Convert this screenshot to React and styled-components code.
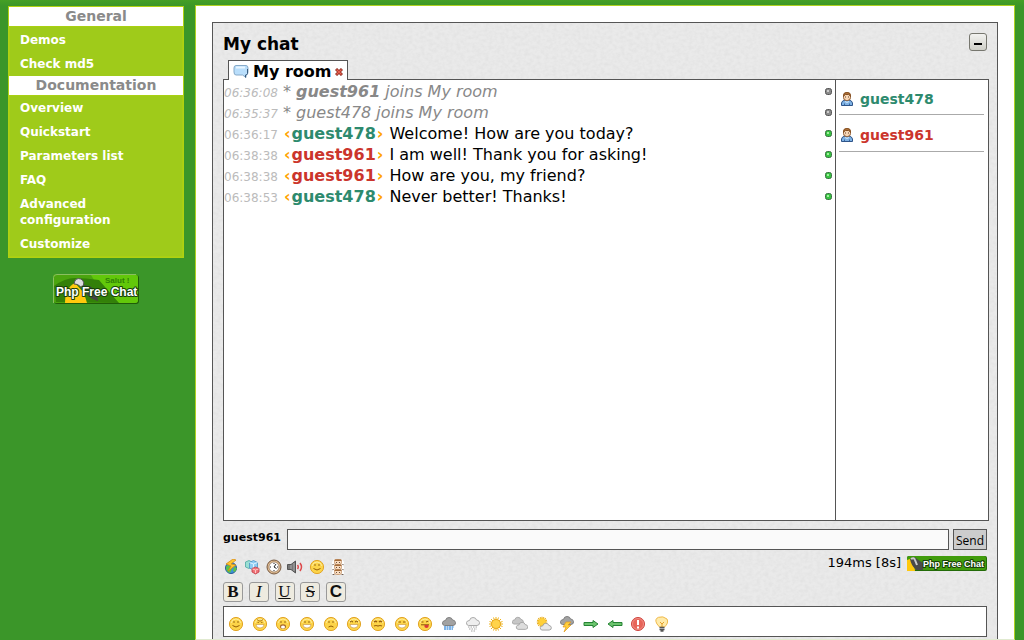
import React from "react";
import styled, { createGlobalStyle } from "styled-components";

const sans = `"DejaVu Sans", Verdana, sans-serif`;
const logoFont = `"Liberation Sans", Arial, sans-serif`;
const teal = "#2d8a6e";
const red = "#cb352c";
const line = "#555";

const paper = encodeURIComponent(
  `<svg xmlns="http://www.w3.org/2000/svg" width="200" height="200"><filter id="p" x="0" y="0" width="100%" height="100%"><feTurbulence type="fractalNoise" baseFrequency="0.25 0.3" numOctaves="3" seed="4" stitchTiles="stitch"/><feColorMatrix values="0 0 0 0 0.6  0 0 0 0 0.6  0 0 0 0 0.6  0.45 0 0 0 -0.15"/></filter><rect width="200" height="200" fill="#eaeaea"/><rect width="200" height="200" filter="url(#p)"/></svg>`
);

const GlobalStyle = createGlobalStyle`
  * { box-sizing: border-box; }
  body { margin: 0; background: #3b9629; font-family: ${sans}; }
  ul, ol { list-style: none; margin: 0; padding: 0; }
  h1, h2 { margin: 0; }
`;

const Page = styled.div`
  display: flex;
  gap: 11px;
  min-height: 100vh;
  padding: 5px 9px 0 8px;
  background: linear-gradient(#459f25, #3b9629 6px);
`;

const Sidebar = styled.aside`
  flex: 0 0 176px;
  padding-top: 1px;
`;

const Menu = styled.nav`
  border: 1px solid #b0d112;
`;

const MenuHeading = styled.h2`
  background: #fff;
  color: #8a8a8a;
  font-size: 14px;
  line-height: 19px;
  text-align: center;
`;

const MenuList = styled.ul`
  background: #9fcb1a;
  border: 1px solid #a9d012;
  border-bottom-width: ${(p) => (p.$last ? "1px" : "0")};
  padding-top: ${(p) => (p.$last ? "0" : "1px")};
`;

const MenuLink = styled.a`
  display: block;
  padding: 4px 40px 4px 10px;
  color: #fff;
  font-size: 12px;
  font-weight: bold;
  line-height: 16px;
  text-decoration: none;
`;

const Badge = styled.a`
  display: block;
  width: 86px;
  height: 31px;
  margin: 16px auto 0;
`;

const Main = styled.main`
  display: flex;
  flex: 1;
  min-width: 0;
  padding: 16px 16px 0;
  background: #fff;
  border: 1px solid #b0d122;
  border-bottom-color: #e0ead0;
`;

const Chat = styled.section`
  display: flex;
  flex: 1;
  flex-direction: column;
  min-width: 0;
  padding: 0 10px 2px;
  border: 1px solid ${line};
  border-bottom: 0;
  background: #e8e8e8 url("data:image/svg+xml,${paper}");
`;

const Header = styled.header`
  display: flex;
  flex: 0 0 37px;
  align-items: center;
  justify-content: space-between;
`;

const Title = styled.h1`
  padding-top: 5px;
  font-size: 17px;
  line-height: 20px;
`;

const MinimizeButton = styled.button`
  display: flex;
  width: 18px;
  height: 18px;
  padding: 0;
  align-items: center;
  justify-content: center;
  border: 1px solid #77776f;
  border-radius: 3px;
  background: linear-gradient(#f2f2f0, #cfcfc8);
`;

const Tabs = styled.div`
  display: flex;
  position: relative;
  padding-left: 5px;
  margin-bottom: -1px;
`;

const Tab = styled.div`
  display: flex;
  height: 20px;
  width: 120px;
  align-items: center;
  gap: 4px;
  padding: 2px 4px 0;
  border: 1px solid ${line};
  border-bottom: 0;
  background: #fff;
`;

const TabButton = styled.button`
  display: flex;
  align-items: center;
  gap: 4px;
  padding: 0;
  border: 0;
  background: none;
  color: #000;
  font: bold 16px/20px ${sans};
  white-space: nowrap;
`;

const CloseButton = styled.button`
  display: flex;
  padding: 0;
  border: 0;
  background: none;
`;

const Panel = styled.div`
  display: flex;
  flex: 1;
  min-height: 240px;
  margin-right: -2px;
  border: 1px solid ${line};
  background: #fff;
`;

const Messages = styled.ol`
  flex: 1;
  padding-top: 1px;
`;

const Message = styled.li`
  display: flex;
  align-items: center;
  justify-content: space-between;
  min-height: 21px;
  padding-right: 3px;
  font-size: 16px;
  line-height: 21px;
  color: ${(p) => (p.$notice ? "#888" : "#000")};
  font-style: ${(p) => (p.$notice ? "italic" : "normal")};
`;

const Time = styled.time`
  margin-right: 5px;
  color: #bbb;
  font-size: 12px;
  line-height: 12px;
`;

const Bracket = styled.span`
  padding: 0 1px;
  color: #ffa500;
  font-weight: bold;
`;

const Nick = styled.strong`
  color: ${(p) => p.$color || "inherit"};
`;

const Users = styled.ul`
  flex: 0 0 153px;
  padding: 0 4px 0 3px;
  border-left: 1px solid ${line};
`;

const User = styled.li`
  display: flex;
  height: 37px;
  align-items: center;
  gap: 5px;
  padding-top: 3px;
  border-bottom: 1px solid #aaa;
  color: ${(p) => p.$color};
  font-size: 14px;
  font-weight: bold;

  &:first-child { height: 35px; }
`;

const InputRow = styled.form`
  display: flex;
  gap: 4px;
  margin-top: 8px;
`;

const NickLabel = styled.label`
  margin-right: 2px;
  font-size: 11px;
  font-weight: bold;
  line-height: 17px;
`;

const TextInput = styled.input`
  flex: 1;
  min-width: 0;
  height: 21px;
  padding: 0 4px;
  border: 1px solid ${line};
  background: #fafafa;
  font: 13px ${sans};
`;

const SendButton = styled.button`
  width: 34px;
  height: 21px;
  padding: 2px 0 0;
  border: 1px solid ${line};
  background: #ccc;
  color: #000;
  font: 12px/16px "Open Sans", sans-serif;
`;

const Tools = styled.div`
  display: flex;
  align-items: flex-start;
  justify-content: space-between;
`;

const ToolColumn = styled.div`
  display: flex;
  flex-direction: column;
  gap: 7px;
  width: 123px;
  padding-top: 9px;
`;

const ToolRow = styled.div`
  display: flex;
  justify-content: space-between;
`;

const IconButton = styled.button`
  display: flex;
  padding: 0;
  border: 0;
  background: none;
`;

const FormatButton = styled.button`
  width: 20px;
  height: 20px;
  padding: 0;
  border: 1px solid #999;
  border-radius: 3px;
  background: #eeebe0;
  color: #111;
  font-family: ${(p) => (p.$sans ? `"Liberation Sans", sans-serif` : `"Liberation Serif", serif`)};
  font-size: 17px;
  font-weight: ${(p) => (p.$bold ? "bold" : "normal")};
  font-style: ${(p) => (p.$italic ? "italic" : "normal")};
  text-decoration: ${(p) => p.$line || "none"};
  line-height: 18px;
`;

const Status = styled.div`
  display: flex;
  align-items: center;
  gap: 6px;
  padding-top: 5px;
  font-size: 13px;
  line-height: 16px;
`;

const LogoLink = styled.a`
  display: flex;
`;

const SmileyBox = styled.div`
  margin-top: 4px;
  padding: 9px 4px 4px;
  border: 1px solid ${line};
  background: #fff;
`;

const SmileyRow = styled.div`
  display: flex;
  justify-content: space-between;
  width: 442px;
  max-width: 100%;
`;

/* ---- drawings ---- */

const LogoText = styled.text`
  fill: #fff;
  stroke: #17420a;
  stroke-width: 2px;
  stroke-linejoin: round;
  paint-order: stroke;
  font-family: ${logoFont};
  font-weight: bold;
  font-size: ${(p) => p.$size}px;
`;

function BigLogo() {
  return (
    <svg width="86" height="30" viewBox="0 0 86 30">
      <rect x="1" y="1" width="85" height="29" rx="3" fill="#1f5c08" />
      <rect x="0" y="0" width="85" height="29" rx="3" fill="#4ba50f" />
      <path d="M38 1H82q3 0 3 3V26q0 3-3 3H66Q50 22 38 1z" fill="#62c80a" />
      <path d="M3 28 1 12Q12 4 22 4T46 6Q58 20 66 29z" fill="#338009" />
      <path d="M12 29C12 18 16 12 22 9L31 19 34 29z" fill="#ffc90d" />
      <path d="M21 10Q22 3 28 5 33 8 29 14 24 9 21 10z" fill="#ddd" stroke="#555" />
      <path d="M28 12Q36 9 44 18L45 27Q34 25 28 12z" fill="#444" />
      <path d="M.5 29V3.500Q.5.5 4 .5H83" fill="none" stroke="#8abf60" />
      <text x="52" y="9" fill="#2f8206" fontFamily={logoFont} fontWeight="bold" fontSize="8">Salut !</text>
      <LogoText x="3" y="22" $size={12}>Php Free Chat</LogoText>
    </svg>
  );
}

function SmallLogo() {
  return (
    <svg width="80" height="15" viewBox="0 0 80 15">
      <rect width="80" height="15" rx="2" fill="#236b08" />
      <rect width="79" height="14" rx="2" fill="#419c0c" />
      <path d="M0 15V4L6 2 8 15z" fill="#ffc90d" />
      <path d="M3 3Q7-1 10 3L16 7V14H9Q4 9 3 3z" fill="#4a4a4a" />
      <path d="M4 3Q7 1 8 4L10 9" fill="none" stroke="#ccc" strokeWidth="2" />
      <LogoText x="16" y="11" $size={9}>Php Free Chat</LogoText>
    </svg>
  );
}

function Bubble() {
  return (
    <svg width="16" height="16" viewBox="0 0 16 16">
      <path d="M3 1.500H13Q15 1.500 15 4V8Q15 11 13 11V13.500L9.500 11H3Q1 11 1 8V4Q1 1.500 3 1.500z" fill="#b9defb" stroke="#86a9c8" />
      <path d="M3 3.500H12" stroke="#e9f6ff" strokeWidth="2" />
      <path d="M14.500 5V9.500Q14 11 12.500 11V13.500" fill="none" stroke="#375a7c" />
    </svg>
  );
}

function Cross() {
  return (
    <svg width="8" height="8" viewBox="0 0 8 8">
      <path d="M1 1 7 7M7 1 1 7" stroke="#8e2c20" strokeWidth="3" />
      <path d="M1.500 1.500 6.500 6.500M6.500 1.500 1.500 6.500" stroke="#e86050" strokeWidth="1.200" />
    </svg>
  );
}

function Dot({ online }) {
  return (
    <svg width="7" height="7" viewBox="0 0 7 7">
      <rect x=".5" y=".5" width="6" height="6" rx="2" fill={online ? "#37c441" : "#8a8a8a"} stroke={online ? "#3b7042" : "#555"} />
      <rect x="2" y="2" width="2" height="2" fill={online ? "#a4efa0" : "#ccc"} />
    </svg>
  );
}

function Person() {
  return (
    <svg width="16" height="16" viewBox="0 0 16 16">
      <path d="M2.500 14.500V12Q3 9.500 6 9H10Q13 9.500 13.500 12V14.500z" fill="#7fb2e4" stroke="#2f558a" />
      <path d="M5.500 14V12.500M10.500 14V12.500" stroke="#3c689f" />
      <path d="M6 10.500Q8 12.500 10 10.500" fill="none" stroke="#d5e9fa" />
      <rect x="4.500" y="1.500" width="7" height="8" rx="3" fill="#f7d6b5" stroke="#8b562b" />
      <path d="M4.500 5Q4.500 1.500 8 1.500T11.500 5L9.500 3.500H6.500z" fill="#b8763b" stroke="#855123" />
      <path d="M6.500 5.500V6.500M9.500 5.500V6.500" stroke="#61452f" />
    </svg>
  );
}

function ToolIcon({ kind }) {
  const art = {
    connect: (
      <>
        <circle cx="8" cy="9" r="5.500" fill="#3d93d8" stroke="#275a93" />
        <path d="M3 8Q5 5 7 7L9 10 7 14Q3 13 3 8zM11 8 14 9 12 13 10 12z" fill="#5ec246" />
        <path d="M10 0 3 5 8 7 5 12 13 6 8 5 13 1z" fill="#ffc52f" stroke="#d78609" strokeWidth=".7" />
      </>
    ),
    color: (
      <>
        <path d="M1.500 3 5 1.500 8 3V8L5 9.500 1.500 8z" fill="#9adfd3" stroke="#4da8a2" strokeWidth=".8" />
        <path d="M5.500 3.500 9.500 1.500 13.500 3.500V9L9.500 11 5.500 9z" fill="#8dcdf2" stroke="#4b93c4" strokeWidth=".8" />
        <path d="M5.500 3.500 9.500 5 13.500 3.500M9.500 5V10.500" fill="none" stroke="#dff2ff" />
        <path d="M8 9.500 11.500 8 15 9.500V13L11.500 15 8 13z" fill="#ef7276" stroke="#c23b48" strokeWidth=".8" />
        <path d="M8.500 10 11.500 11 14.500 10M11.500 11V14" fill="none" stroke="#ffc6c6" />
      </>
    ),
    clock: (
      <>
        <circle cx="8" cy="8" r="7" fill="#dcb98f" stroke="#6b4c33" strokeWidth=".9" />
        <circle cx="8" cy="8" r="5" fill="#fff" stroke="#8f7156" strokeWidth=".7" />
        <path d="M10 5 8 8 10.500 9.500M4 8H5M8 12V11M8 4V5M12 8H11" fill="none" stroke="#222" />
      </>
    ),
    sound: (
      <>
        <path d="M.5 5.500H4L8.500 2V14L4 10.500H.5z" fill="#777" stroke="#555" />
        <path d="M4 6V10M7 4V12" stroke="#aaa" />
        <path d="M10.500 6Q12 8 10.500 10M13 4Q16 8 13 12" fill="none" stroke="#dd494b" strokeWidth="1.500" />
      </>
    ),
    people: (
      <>
        {[0, 5, 10].map((y) => (
          <g key={y} transform={`translate(0 ${y})`}>
            <path d="M2 6V3L4 0H12L14 3V6z" fill="#fff" />
            <rect x="4.500" y=".5" width="7" height="5" rx="2" fill="#f9dcc0" stroke="#b98352" strokeWidth=".7" />
            <path d="M4.500 1.200H11.500" stroke="#a66d3b" strokeWidth="1.600" />
            <path d="M6.500 3V4M9.500 3V4M2.500 5.500H4.500M11.500 5.500H13.500" stroke="#493223" strokeWidth=".8" />
          </g>
        ))}
      </>
    ),
  };
  return <svg width="16" height="16" viewBox="0 0 16 16">{art[kind]}</svg>;
}

function Face({ mood }) {
  const eyes = <path d="M6 5V7M10 5V7" stroke="#9a6a14" />;
  const grin = <path d="M4 8.500H12Q12 12 8 12T4 8.500z" fill="#fff" stroke="#c8923a" strokeWidth=".6" />;
  const art = {
    smile: <>{eyes}<path d="M4.500 9.500Q8 12.500 11.500 9.500" fill="none" stroke="#945d05" /></>,
    evil: <><path d="M5 3.500 7 5 9 5 11 3.500M5.500 6.500H7M9 6.500H10.500" fill="none" stroke="#a8751c" strokeWidth=".9" />{grin}</>,
    gasp: <>{eyes}<ellipse cx="8" cy="10.500" rx="3" ry="2.300" fill="#a9692c" /><ellipse cx="8" cy="11" rx="2" ry="1.500" fill="#fff" /></>,
    grin: <>{eyes}{grin}</>,
    sad: <>{eyes}<path d="M5.500 11Q8 9 10.500 11" fill="none" stroke="#945d05" /></>,
    laugh: <><path d="M4 6Q5.500 4.500 7 6M9 6Q10.500 4.500 12 6" fill="none" stroke="#7e4c05" />{grin}</>,
    smug: <><path d="M4 6Q5.500 4.500 7 6M9 6Q10.500 4.500 12 6M4 10Q6 9 8 10 10 9 12 10" fill="none" stroke="#9a6010" strokeWidth="1.200" /></>,
    wink: <><path d="M4.500 6H7M9 6H11.500" fill="none" stroke="#945d05" />{grin}</>,
    tongue: <><path d="M4.500 6H6.500M9 6 11.500 5M4 8.800H12" stroke="#8d5309" /><path d="M7.500 9H11.500V11Q9.500 13 7.500 11z" fill="#d93a39" /></>,
  };
  return (
    <svg width="16" height="16" viewBox="0 0 16 16">
      <circle cx="8" cy="8" r="6.600" fill="#fcd449" stroke="#e2a527" />
      <path d="M3 7Q4 3 8 3T13 7" fill="none" stroke="#ffec9c" />
      {art[mood]}
    </svg>
  );
}

const cloud = "M3.500 9.500Q1 9 1.500 6.500 2 4.500 4.500 4.500 5 1.500 8 1.500T11.500 4Q14 4 14.500 6.500T12 9.500z";
const sunRays = "M8 1V15M1 8H15M3 3 13 13M13 3 3 13M5.500 1.500 10.500 14.500M10.500 1.500 5.500 14.500M1.500 5.500 14.500 10.500M14.500 5.500 1.500 10.500";

function Symbol({ kind }) {
  const art = {
    rain: <><path d="M3 11H13M3 13H12" stroke="#7db3e8" strokeWidth="2" strokeDasharray="2 .5" /><path d={cloud} fill="#a2a2a2" stroke="#808080" /></>,
    snow: <><path d="M3 11H13M4 13H12M6 15H10" stroke="#a2a2a2" strokeDasharray="1.500 1" /><path d={cloud} fill="#eee" stroke="#aaa" /></>,
    sun: <><path d={sunRays} stroke="#eeb31d" /><circle cx="8" cy="8" r="4.500" fill="#ffd34a" stroke="#e9a922" /></>,
    cloudy: <><path d={cloud} fill="#c6c6c6" stroke="#a2a2a2" transform="translate(-1 0) scale(.85)" /><path d={cloud} fill="#ddd" stroke="#a2a2a2" transform="translate(3 5) scale(.88)" /></>,
    partly: <><g transform="scale(.75)"><path d={sunRays} stroke="#e8ac1c" strokeWidth="1.500" /><circle cx="8" cy="8" r="5" fill="#ffd039" /></g><path d={cloud} fill="#e8e8e8" stroke="#999" transform="translate(3 6) scale(.85)" /></>,
    storm: <><path d={cloud} fill="#a2a2a2" stroke="#808080" transform="translate(0 -1)" /><path d="M7 6H12L9 9H12L5 16 7 11H4z" fill="#ffce3b" stroke="#df991c" strokeWidth=".7" /></>,
    right: <path d="M1 6.500H10V4.500L15 8 10 11.500V9.500H1z" fill="#6bc46d" stroke="#268335" />,
    left: <path d="M15 6.500H6V4.500L1 8 6 11.500V9.500H15z" fill="#6bc46d" stroke="#268335" />,
    alert: <><circle cx="8" cy="8" r="6.500" fill="#e76459" stroke="#ce433d" /><circle cx="8" cy="8" r="5.500" fill="none" stroke="#f4a198" strokeWidth=".7" /><path d="M8 4V9M8 10.500V12.500" stroke="#fff" strokeWidth="2" /></>,
    bulb: <><path d="M5.500 11 3 8Q0 3 4.500 1.300T13 3Q15 7 10.500 11z" fill="#ffebaa" stroke="#efb94b" /><path d="M6 6 8 8 10 6M8 8V11" fill="none" stroke="#e4a028" /><path d="M5.500 11.500H10.500M5.500 13.500H10.500M6.500 15H9.500" stroke="#555" strokeWidth="1.300" /></>,
  };
  return <svg width="16" height="16" viewBox="0 0 16 16">{art[kind]}</svg>;
}

/* ---- data ---- */

const menu = [
  ["General", ["Demos", "Check md5"]],
  ["Documentation", ["Overview", "Quickstart", "Parameters list", "FAQ", "Advanced configuration", "Customize"]],
];
const colors = { guest478: teal, guest961: red };
const messages = [
  { time: "06:36:08", notice: <>* <Nick>guest961</Nick> joins My room</> },
  { time: "06:35:37", notice: "* guest478 joins My room" },
  { time: "06:36:17", nick: "guest478", text: "Welcome! How are you today?" },
  { time: "06:38:38", nick: "guest961", text: "I am well! Thank you for asking!" },
  { time: "06:38:38", nick: "guest961", text: "How are you, my friend?" },
  { time: "06:38:53", nick: "guest478", text: "Never better! Thanks!" },
];
const faces = ["smile", "evil", "gasp", "grin", "sad", "laugh", "smug", "wink", "tongue"];
const symbols = ["rain", "snow", "sun", "cloudy", "partly", "storm", "right", "left", "alert", "bulb"];

export default function App() {
  return (
    <>
      <GlobalStyle />
      <Page>
        <Sidebar>
          <Menu>
            {menu.map(([heading, items], i) => (
              <React.Fragment key={heading}>
                <MenuHeading>{heading}</MenuHeading>
                <MenuList $last={i === 1}>
                  {items.map((item) => (
                    <li key={item}><MenuLink href="#">{item}</MenuLink></li>
                  ))}
                </MenuList>
              </React.Fragment>
            ))}
          </Menu>
          <Badge href="#" aria-label="Php Free Chat"><BigLogo /></Badge>
        </Sidebar>
        <Main>
          <Chat>
            <Header>
              <Title>My chat</Title>
              <MinimizeButton aria-label="Minimize">
                <svg width="8" height="8"><path d="M0 5H8V7H0z" /></svg>
              </MinimizeButton>
            </Header>
            <Tabs>
              <Tab>
                <TabButton><Bubble />My room</TabButton>
                <CloseButton aria-label="Close My room"><Cross /></CloseButton>
              </Tab>
            </Tabs>
            <Panel>
              <Messages>
                {messages.map((m, i) => (
                  <Message key={i} $notice={!!m.notice}>
                    <span>
                      <Time>{m.time}</Time>
                      {m.notice || (
                        <>
                          <Bracket>‹</Bracket>
                          <Nick $color={colors[m.nick]}>{m.nick}</Nick>
                          <Bracket>›</Bracket> {m.text}
                        </>
                      )}
                    </span>
                    <Dot online={!m.notice} />
                  </Message>
                ))}
              </Messages>
              <Users>
                {Object.entries(colors).map(([name, color]) => (
                  <User key={name} $color={color}><Person />{name}</User>
                ))}
              </Users>
            </Panel>
            <InputRow onSubmit={(e) => e.preventDefault()}>
              <NickLabel htmlFor="words">guest961</NickLabel>
              <TextInput id="words" type="text" />
              <SendButton type="submit">Send</SendButton>
            </InputRow>
            <Tools>
              <ToolColumn>
                <ToolRow>
                  <IconButton aria-label="Disconnect"><ToolIcon kind="connect" /></IconButton>
                  <IconButton aria-label="Nickname colors"><ToolIcon kind="color" /></IconButton>
                  <IconButton aria-label="Clock"><ToolIcon kind="clock" /></IconButton>
                  <IconButton aria-label="Sound"><ToolIcon kind="sound" /></IconButton>
                  <IconButton aria-label="Smileys"><Face mood="smile" /></IconButton>
                  <IconButton aria-label="Users"><ToolIcon kind="people" /></IconButton>
                </ToolRow>
                <ToolRow>
                  <FormatButton $bold>B</FormatButton>
                  <FormatButton $italic>I</FormatButton>
                  <FormatButton $line="underline">U</FormatButton>
                  <FormatButton $line="line-through">S</FormatButton>
                  <FormatButton $bold $sans>C</FormatButton>
                </ToolRow>
              </ToolColumn>
              <Status>
                <span>194ms [8s]</span>
                <LogoLink href="#" aria-label="Php Free Chat"><SmallLogo /></LogoLink>
              </Status>
            </Tools>
            <SmileyBox>
              <SmileyRow>
                {faces.map((f) => (
                  <IconButton key={f} aria-label={f}><Face mood={f} /></IconButton>
                ))}
                {symbols.map((s) => (
                  <IconButton key={s} aria-label={s}><Symbol kind={s} /></IconButton>
                ))}
              </SmileyRow>
            </SmileyBox>
          </Chat>
        </Main>
      </Page>
    </>
  );
}
